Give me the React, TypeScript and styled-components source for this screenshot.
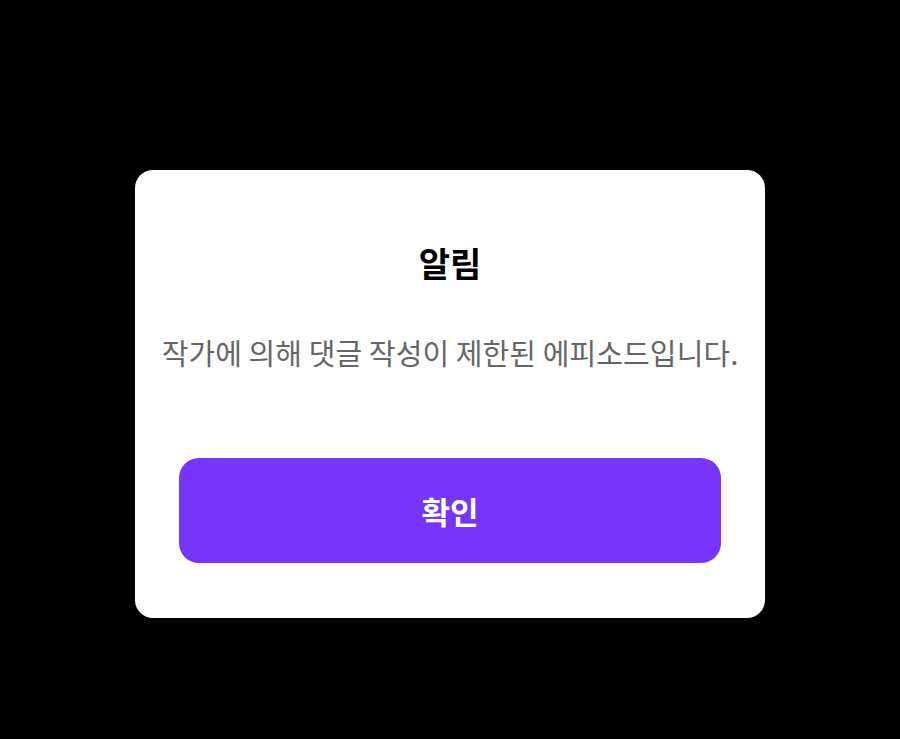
import React from 'react';
import styled, { createGlobalStyle } from 'styled-components';

const GlobalStyle = createGlobalStyle`
  html, body {
    margin: 0;
    padding: 0;
    background: #000;
  }
  body {
    font-family: "Noto Sans CJK KR", "Noto Sans", sans-serif;
  }
`;

const Backdrop = styled.div`
  width: 900px;
  height: 739px;
  box-sizing: border-box;
  padding-top: 170px;
  background: #000;
  display: flex;
  align-items: flex-start;
  justify-content: center;
`;

const Dialog = styled.div`
  width: 630px;
  box-sizing: border-box;
  padding: 72px 44px 55px;
  background: #fff;
  border-radius: 18px;
  display: flex;
  flex-direction: column;
  align-items: center;
`;

const Title = styled.h2`
  margin: 0;
  font-size: 34px;
  line-height: 42px;
  font-weight: 700;
  color: #000;
`;

const Message = styled.p`
  margin: 48px 0 0;
  font-size: 29px;
  line-height: 40px;
  font-weight: 400;
  letter-spacing: 0.1px;
  color: #666;
  white-space: nowrap;
`;

const ConfirmButton = styled.button`
  margin-top: 86px;
  width: 100%;
  height: 105px;
  border: none;
  border-radius: 20px;
  background: #7835fa;
  color: #fff;
  font-family: inherit;
  font-size: 31px;
  font-weight: 700;
  cursor: pointer;
`;

export default function App() {
  return (
    <>
      <GlobalStyle />
      <Backdrop>
        <Dialog>
          <Title>알림</Title>
          <Message>작가에 의해 댓글 작성이 제한된 에피소드입니다.</Message>
          <ConfirmButton>확인</ConfirmButton>
        </Dialog>
      </Backdrop>
    </>
  );
}
